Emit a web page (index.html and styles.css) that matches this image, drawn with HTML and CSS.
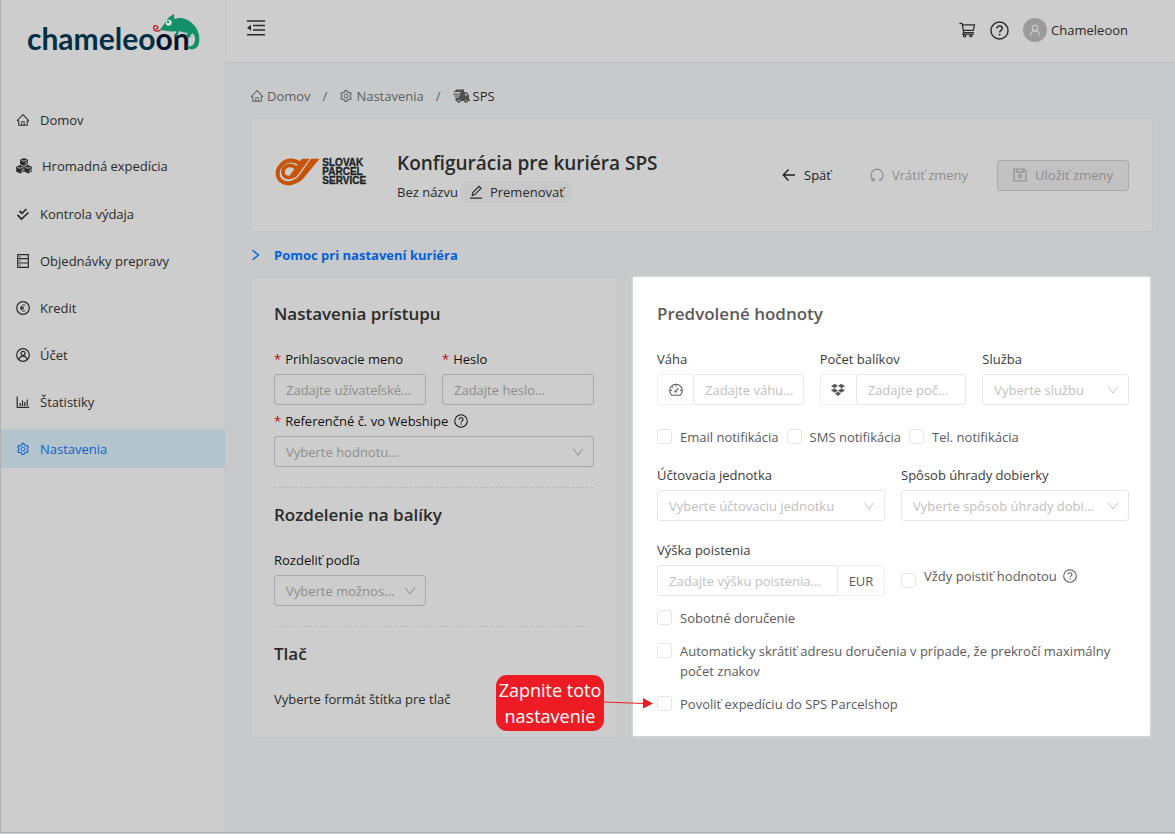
FILE: index.html
```html
<!DOCTYPE html>
<html lang="sk">
<head>
<meta charset="utf-8">
<meta name="viewport" content="width=device-width, initial-scale=1">
<title>Konfigurácia pre kuriéra SPS</title>
<link rel="stylesheet" href="styles.css">
</head>
<body>
<svg class="defs" aria-hidden="true">
  <symbol id="home" viewBox="0 0 1024 1024"><path fill="currentColor" d="M946.5 505L560.1 118.8l-25.9-25.9a31.5 31.5 0 00-44.4 0L77.5 505a63.9 63.9 0 00-18.8 46c.4 35.2 29.7 63.3 64.9 63.3h42.5V940h691.8V614.3h43.4c17.1 0 33.2-6.7 45.3-18.8a63.6 63.6 0 0018.7-45.3c0-17-6.7-33.1-18.8-45.2zM568 868H456V664h112v204zm217.9-325.7V868H632V640c0-22.1-17.9-40-40-40H432c-22.1 0-40 17.9-40 40v228H238.1V542.3h-96l370-369.7 23.1 23.1L882 542.3h-96.1z"/></symbol>
  <symbol id="gear" viewBox="0 0 1024 1024"><path fill="currentColor" d="M924.8 625.7l-65.5-56c3.1-19 4.7-38.4 4.7-57.8s-1.6-38.8-4.7-57.8l65.5-56a32.03 32.03 0 009.3-35.2l-.9-2.6a443.74 443.74 0 00-79.7-137.9l-1.8-2.1a32.12 32.12 0 00-35.1-9.5l-81.3 28.9c-30-24.6-63.5-44-99.7-57.6l-15.7-85a32.05 32.05 0 00-25.8-25.7l-2.7-.5c-52.1-9.4-106.9-9.4-159 0l-2.7.5a32.05 32.05 0 00-25.8 25.7l-15.8 85.4a351.86 351.86 0 00-99 57.4l-81.9-29.1a32 32 0 00-35.1 9.5l-1.8 2.1a446.02 446.02 0 00-79.7 137.9l-.9 2.6c-4.5 12.5-.8 26.5 9.3 35.2l66.3 56.6c-3.1 18.8-4.6 38-4.6 57.1 0 19.2 1.5 38.4 4.6 57.1L99 625.5a32.03 32.03 0 00-9.3 35.2l.9 2.6c18.1 50.4 44.9 96.9 79.7 137.9l1.8 2.1a32.12 32.12 0 0035.1 9.5l81.9-29.1c29.8 24.5 63.1 43.9 99 57.4l15.8 85.4a32.05 32.05 0 0025.8 25.7l2.7.5a449.4 449.4 0 00159 0l2.7-.5a32.05 32.05 0 0025.8-25.7l15.7-85a350 350 0 0099.7-57.6l81.3 28.9a32 32 0 0035.1-9.5l1.8-2.1c34.8-41.1 61.6-87.5 79.7-137.9l.9-2.6c4.5-12.3.8-26.3-9.3-35zM788.3 465.9c2.5 15.1 3.8 30.6 3.8 46.1s-1.3 31-3.8 46.1l-6.6 40.1 74.7 63.9a370.03 370.03 0 01-42.6 73.6L721 702.8l-31.4 25.8c-23.9 19.6-50.5 35-79.3 45.8l-38.1 14.3-17.9 97a377.5 377.5 0 01-85 0l-17.9-97.2-37.8-14.5c-28.5-10.8-55-26.2-78.7-45.7l-31.4-25.9-93.4 33.2c-17-22.9-31.2-47.6-42.6-73.6l75.5-64.5-6.5-40c-2.4-14.9-3.7-30.3-3.7-45.5 0-15.3 1.2-30.6 3.7-45.5l6.5-40-75.5-64.5c11.3-26.1 25.6-50.7 42.6-73.6l93.4 33.2 31.4-25.9c23.7-19.5 50.2-34.9 78.7-45.7l37.9-14.3 17.9-97.2c28.1-3.2 56.8-3.2 85 0l17.9 97 38.1 14.3c28.7 10.8 55.4 26.2 79.3 45.8l31.4 25.8 92.8-32.9c17 22.9 31.2 47.6 42.6 73.6L781.8 426l6.5 39.9z"/><circle cx="512" cy="512" r="144" fill="none" stroke="currentColor" stroke-width="68"/></symbol>
  <symbol id="help" viewBox="0 0 16 16"><g fill="none" stroke="currentColor" stroke-width="1.2"><circle cx="8" cy="8" r="7.2"/><path d="M5.8 6.4c0-3 4.5-2.8 4.5-.1 0 1.6-2.2 1.5-2.2 3.3"/></g><circle cx="8.1" cy="11.5" r=".8" fill="currentColor"/></symbol>
  <symbol id="down" viewBox="0 0 12 12"><path d="M1.2 2.5 6 9.2l4.8-6.7" fill="none" stroke="currentColor"/></symbol>
</svg>

<div class="app">
  <aside class="sidebar">
    <a class="brand" href="#">
      <svg viewBox="80 30 525 135" role="img" aria-label="chameleoon">
        <text x="80" y="149" class="brand-text">chamele<tspan>o</tspan><tspan class="brand-dark">on</tspan></text>
        <path class="brand-green" d="M478 91 498 62Q507 48 521 42l1 15q27-10 52 11 23 19 23 50 0 28-19 30-16 1-19-14 6 7 13 4 13-5 12-22-1-12-9-16l-8 14-12-6 8-10q-13 2-26-5l-8 17-5-2 4-14q-22 1-30-1-8-3-20-2Z"/>
        <circle cx="505" cy="68" r="9" fill="#d6e8e0"/><circle cx="503" cy="66" r="3.5" fill="#12805f"/>
        <path d="M480 91q-11 5-18-1c-6-8 0-16 8-12 6 4 1 11-4 8" fill="none" stroke="#c9101c" stroke-width="4"/>
      </svg>
    </a>
    <nav class="menu">
      <a href="#"><svg class="icon"><use href="#home"/></svg>Domov</a>
      <a href="#" class="wide"><svg class="icon-cubes" viewBox="0 0 16 16"><g fill="currentColor"><path d="m8 0 3.900 1.800v4.400L8 8 4.100 6.200V1.800zM4 7l3.800 1.800v4.600L4 15.400.2 13.400V8.800zM12 7l3.800 1.800v4.600L12 15.400l-3.800-2V8.800z"/></g><path d="m5.500 2.300 2.500 1 2.500-1M8.800 6.300l2-1V3.500M1.500 9.300l2.500 1 2.500-1M4.800 13.600l2-1v-2M9.500 9.300l2.500 1 2.500-1M12.800 13.600l2-1v-2" fill="none" stroke="#cdcdcd" stroke-width=".9"/></svg>Hromadná expedícia</a>
      <a href="#"><svg class="icon" viewBox="0 0 14 14"><path d="m3.500 4 2.500 2.300L10.500 2M1.500 7.800 5.500 12l7-6.500" fill="none" stroke="currentColor" stroke-width="1.700"/></svg>Kontrola výdaja</a>
      <a href="#"><svg class="icon" viewBox="0 0 14 14"><path d="M1.700.6h10.600v12.800H1.700zM1.700 4.600h10.600M1.700 9h10.600M3.500 2.700h1M3.500 6.800h1M3.500 11.200h1" fill="none" stroke="currentColor" stroke-width="1.200"/></svg>Objednávky prepravy</a>
      <a href="#"><svg class="icon" viewBox="0 0 14 14"><g fill="none" stroke="currentColor"><circle cx="7" cy="7" r="6.300" stroke-width="1.200"/><path d="M9.300 4.600C7 3 5.300 4.500 5.300 7s1.700 4 4 2.500M4 6.300h4M4 7.800h4"/></g></svg>Kredit</a>
      <a href="#"><svg class="icon" viewBox="0 0 14 14"><g fill="none" stroke="currentColor" stroke-width="1.200"><circle cx="7" cy="7" r="6.300"/><circle cx="7" cy="5.400" r="2"/><path d="M3.200 11.500c.6-4.400 7-4.400 7.600 0"/></g></svg>Účet</a>
      <a href="#"><svg class="icon" viewBox="0 0 14 14"><path d="M1.200 1.500v10.900h12M4.200 11V8M6.500 11V5.500M8.800 11V7M11.200 11V4.500" fill="none" stroke="currentColor" stroke-width="1.200"/></svg>Štatistiky</a>
      <a href="#" class="active" aria-current="page"><svg class="icon"><use href="#gear"/></svg>Nastavenia</a>
    </nav>
  </aside>

  <div class="page">
    <header class="topbar">
      <button class="plain" aria-label="Zbaliť menu"><svg class="icon-fold" viewBox="0 0 18 16"><path d="M0 1h18M6 5.500h12M6 10h12M0 14.700h18" stroke="currentColor" stroke-width="1.500"/><path d="M0 7.800 4 4.800v6z" fill="currentColor"/></svg></button>
      <div class="account">
        <button class="plain" aria-label="Košík"><svg class="icon-cart" viewBox="0 0 18 16"><g fill="none" stroke="currentColor" stroke-width="1.300"><path d="M.5 1h2.700l1.800 9.800h10.800M3.400 2.500h13l-1.200 6H4.500M5 10.800l-1 1.700h12"/><circle cx="6" cy="14" r="1.200"/><circle cx="12.500" cy="14" r="1.200"/></g></svg></button>
        <button class="plain" aria-label="Pomoc"><svg class="icon-help"><use href="#help"/></svg></button>
        <a class="user" href="#"><span class="avatar"><svg viewBox="0 0 12 12"><g fill="none" stroke="#cfcfcf" stroke-width="1.100"><circle cx="6" cy="4" r="2.700"/><path d="M1.500 11.500c.3-6 8.700-6 9 0"/></g></svg></span>Chameleoon</a>
      </div>
    </header>

    <main class="content">
      <nav class="crumbs" aria-label="Cesta">
        <a href="#"><svg class="icon"><use href="#home"/></svg>Domov</a><span>/</span>
        <a href="#"><svg class="icon"><use href="#gear"/></svg>Nastavenia</a><span>/</span>
        <b><svg class="icon-truck" viewBox="0 0 17 14"><path fill="#505050" d="M2.500.5H11V3h2.200L16 6v4.500h1V12H2.500V8.500H6v-1H1v-1h6v-1H0v-1h7.500V3H1V2h1.500z"/><path d="M12 4.200v2.300h2.700l-2.200-2.300z" fill="#c8c9cb"/><circle cx="5.800" cy="11.500" r="2.200" fill="#505050"/><circle cx="13" cy="11.500" r="2.200" fill="#505050"/><circle cx="5.800" cy="11.500" r=".8" fill="#c8c9cb"/><circle cx="13" cy="11.500" r=".8" fill="#c8c9cb"/></svg>SPS</b>
      </nav>

      <section class="card title-card">
        <svg class="courier" viewBox="0 0 276 192" role="img" aria-label="Slovak Parcel Service">
          <g fill="none" stroke="#c65306">
            <path d="M76 24C58 9 36 11 22 24 2 42 4 68 24 78c12 6 26 5 38-3" stroke-width="12"/>
            <path d="M64 36C52 26 40 27 31 33c-11 9-8 24 0 29 8 4 16 3 23-2" stroke-width="11"/>
          </g>
          <path d="M80 8h24L66 60q-7 8-16 7l-3-12z" fill="#c65306"/>
          <path d="M108 8h26L86 66Q76 79 60 83l-4-11q10-4 16-13z" fill="#c65306"/>
          <g class="courier-text"><text x="142" y="31">SLOVAK</text><text x="142" y="58">PARCEL</text><text x="142" y="85">SERVICE</text></g>
        </svg>
        <div class="title-block">
          <h1>Konfigurácia pre kuriéra SPS</h1>
          <div class="subtitle">Bez názvu <button class="rename"><svg class="icon" viewBox="0 0 14 14"><path d="M1 13.200h12M3.300 10.500l.5-3L10 1.300l2 2-6.200 6.300z" fill="none" stroke="currentColor" stroke-width="1.200"/></svg>Premenovať</button></div>
        </div>
        <div class="actions">
          <button class="plain back"><svg class="icon" viewBox="0 0 14 14"><path d="M13 7H1.500M6.500 1.500 1.200 7l5.300 5.500" fill="none" stroke="currentColor" stroke-width="1.300"/></svg>Späť</button>
          <button class="plain" disabled><svg class="icon" viewBox="0 0 14 14"><path d="M3.800 12.300a6 6 0 1 1 6.400 0M1.500 12.600h2.600V10M10 13v-2" fill="none" stroke="currentColor" stroke-width="1.200"/></svg>Vrátiť zmeny</button>
          <button class="save" disabled><svg class="icon" viewBox="0 0 14 14"><g fill="none" stroke="currentColor" stroke-width="1.200"><path d="M1 1h9.800L13 3.200V13H1zM4 1v3.200h6V1"/><circle cx="7" cy="8.300" r="1.700"/></g></svg>Uložiť zmeny</button>
        </div>
      </section>

      <a class="help-link" href="#"><svg viewBox="0 0 10 12"><path d="m1.500 1.200 6 4.800-6 4.800" fill="none" stroke="currentColor" stroke-width="1.400"/></svg>Pomoc pri nastavení kuriéra</a>

      <div class="columns">
        <form class="card panel">
          <h2>Nastavenia prístupu</h2>
          <div class="two">
            <div class="field"><label for="login"><i>*</i>Prihlasovacie meno</label><input id="login" class="control" type="text" placeholder="Zadajte užívateľské..."></div>
            <div class="field"><label for="pass"><i>*</i>Heslo</label><input id="pass" class="control" type="password" placeholder="Zadajte heslo..."></div>
          </div>
          <div class="field next"><label for="ref"><i>*</i>Referenčné č. vo Webshipe <svg class="icon hint"><use href="#help"/></svg></label><div class="select"><select id="ref" class="control"><option>Vyberte hodnotu...</option></select><svg><use href="#down"/></svg></div></div>
          <hr>
          <h2>Rozdelenie na balíky</h2>
          <div class="two">
            <div class="field"><label for="split">Rozdeliť podľa</label><div class="select"><select id="split" class="control"><option>Vyberte možnos...</option></select><svg><use href="#down"/></svg></div></div>
          </div>
          <hr>
          <h2>Tlač</h2>
          <p>Vyberte formát štítka pre tlač</p>
        </form>

        <form class="panel spotlight">
          <h2>Predvolené hodnoty</h2>
          <div class="three">
            <div class="field"><label for="weight">Váha</label><div class="group"><span class="addon"><svg class="icon" viewBox="0 0 14 14"><g fill="none" stroke="currentColor" stroke-width="1.100"><path d="M2.800 12.300a6.300 6.300 0 1 1 8.400 0zM6.500 8.500l3-3.300M7 2v1.500M1.500 7.500H3M11 7.500h1.500M3.300 3.700l1 1"/><circle cx="6.500" cy="8.500" r=".6"/></g></svg></span><input id="weight" class="control" type="text" placeholder="Zadajte váhu..."></div></div>
            <div class="field"><label for="count">Počet balíkov</label><div class="group"><span class="addon"><svg class="icon" viewBox="0 0 14 14"><path fill="currentColor" d="M4 .8 7 3 3.500 5.200 0 3zM10 .8 7 3l3.500 2.200L14 3zM3.500 5.200 7 7.400 4 9.700 0 7.400zM10.500 5.200 7 7.400l3 2.300 4-2.300zM4 10.800l3-2.300 3 2.300-3 2.200z"/><path d="M7 3.200l3.300 2.100L7 7.200 3.700 5.300z" fill="#fff"/></svg></span><input id="count" class="control" type="text" placeholder="Zadajte poč..."></div></div>
            <div class="field"><label for="service">Služba</label><div class="select"><select id="service" class="control"><option>Vyberte službu</option></select><svg><use href="#down"/></svg></div></div>
          </div>
          <div class="checks">
            <label class="check"><input type="checkbox">Email notifikácia</label>
            <label class="check"><input type="checkbox">SMS notifikácia</label>
            <label class="check"><input type="checkbox">Tel. notifikácia</label>
          </div>
          <div class="two">
            <div class="field"><label for="unit">Účtovacia jednotka</label><div class="select"><select id="unit" class="control"><option>Vyberte účtovaciu jednotku</option></select><svg><use href="#down"/></svg></div></div>
            <div class="field"><label for="cod">Spôsob úhrady dobierky</label><div class="select"><select id="cod" class="control"><option>Vyberte spôsob úhrady dobi...</option></select><svg><use href="#down"/></svg></div></div>
          </div>
          <div class="two insurance">
            <div class="field"><label for="ins">Výška poistenia</label><div class="group"><input id="ins" class="control" type="text" placeholder="Zadajte výšku poistenia..."><span class="addon right">EUR</span></div></div>
            <label class="check always"><input type="checkbox"><span>Vždy poistiť hodnotou <svg class="icon hint"><use href="#help"/></svg></span></label>
          </div>
          <div class="stack">
            <label class="check"><input type="checkbox">Sobotné doručenie</label>
            <label class="check"><input type="checkbox">Automaticky skrátiť adresu doručenia v prípade, že prekročí maximálny počet znakov</label>
            <div class="marked">
              <label class="check"><input type="checkbox">Povoliť expedíciu do SPS Parcelshop</label>
              <div class="callout"><div class="bubble">Zapnite toto nastavenie</div><svg viewBox="0 0 49 12"><path d="m0 5 40 1.500" stroke="#ed1c24"/><path d="M39 1v10.500l10-5z" fill="#ed1c24"/></svg></div>
            </div>
          </div>
        </form>
      </div>
    </main>
  </div>
</div>
</body>
</html>
```
FILE: styles.css
```css
* { box-sizing: border-box; }

body {
  margin: 0;
  font: 13px/20px "Open Sans", "Noto Sans", sans-serif;
  color: #2a2a2a;
  background: #c8c9cb;
}

a { color: inherit; text-decoration: none; }
button, input, select { font: inherit; color: inherit; }
.defs { position: absolute; width: 0; height: 0; }
.icon { width: 14px; height: 14px; flex: none; }

.app {
  display: flex;
  min-height: 833px;
  border-left: 1px solid #b0b0b0;
  border-bottom: 1px solid #b0b0b0;
}

.sidebar {
  width: 225px;
  flex: none;
  background: #cdcdcd;
  border-right: 1px solid #c0c4c6;
}

.brand { display: block; height: 100px; padding: 10px 0 0 26px; }
.brand svg { display: block; width: 175px; height: 45px; }
.brand-text { font: 700 90px Lato, sans-serif; fill: #032f44; }
.brand-dark { fill: #03112a; }
.brand-green { fill: #149068; }

.menu { display: grid; gap: 8px; }
.menu a {
  display: flex;
  align-items: center;
  gap: 10px;
  height: 39px;
  padding-left: 15px;
}
.menu .wide { padding-bottom: 1px; }
.icon-cubes { width: 16px; height: 16px; flex: none; }
.menu .active { background: #b3c4cc; color: #0a62d0; }

.page { flex: 1; min-width: 0; }

.topbar {
  display: flex;
  justify-content: space-between;
  align-items: center;
  height: 62px;
  padding: 0 47px 2px 21px;
  background: #cdcdcd;
  box-shadow: 0 1px 2px #b9c0c6;
}
.plain {
  display: flex;
  align-items: center;
  gap: 8px;
  padding: 0;
  border: 0;
  background: none;
}
.icon-fold { width: 18px; height: 16px; margin-bottom: 4px; }
.account { display: flex; align-items: center; gap: 14px; }
.icon-cart { width: 17px; height: 16px; }
.icon-help { width: 19px; height: 19px; }
.user { display: flex; align-items: center; gap: 4px; }
.avatar {
  display: grid;
  place-items: center;
  width: 24px;
  height: 24px;
  border-radius: 50%;
  background: #9b9b9b;
}
.avatar svg { width: 12px; height: 12px; }

.content { padding: 24px 22px 24px 24px; }

.crumbs { display: flex; gap: 12px; color: #5c5e60; }
.crumbs a, .crumbs b { display: flex; align-items: center; gap: 3px; font-weight: 400; }
.crumbs b { color: #2a2a2a; }
.icon-truck { width: 17px; height: 14px; }

.card { background: #cdcdcd; border: 1px solid #bfc4ca; border-radius: 3px; }

.title-card {
  display: flex;
  align-items: center;
  height: 114px;
  margin-top: 12px;
  padding: 0 23px 0 24px;
}
.courier { width: 92px; height: 64px; margin-top: 26px; }
.courier-text { font: 700 30px "Liberation Sans", sans-serif; fill: #1c2527; stroke: #1c2527; stroke-width: 1; }
.title-block { margin: 2px 0 0 30px; }
h1 { margin: 0 0 4px; font-size: 19px; line-height: 28px; font-weight: 600; }
.subtitle { display: flex; align-items: center; gap: 3px; }
.rename {
  display: flex;
  align-items: center;
  gap: 7px;
  height: 22px;
  padding: 0 8px;
  border: 0;
  border-radius: 3px;
  background: #c8c8c8;
}
.actions { display: flex; align-items: center; margin-left: auto; color: #8d8d8d; }
.actions .plain { margin-right: 39px; }
.actions .plain + .plain { margin-right: 29px; }
.actions button:disabled { color: #8d8d8d; }
.back { color: #1c1c1c; }
.save {
  display: flex;
  align-items: center;
  gap: 8px;
  height: 31px;
  padding: 0 15px;
  border: 1px solid #a9a9a9;
  border-radius: 3px;
  background: #c2c2c2;
}

.help-link {
  display: flex;
  align-items: center;
  gap: 13px;
  margin: 13px 0 12px 1px;
  font-weight: 700;
  color: #0460d6;
}
.help-link svg { width: 10px; height: 12px; }

.columns { display: grid; grid-template-columns: 368fr 520fr; gap: 15px; }
.panel { min-width: 0; padding: 24px 23px; }
.spotlight {
  margin: 0 3px 2px 0;
  padding: 25px 21px 22px 24px;
  background: #fff;
  box-shadow: 0 0 3px #e4e6e8;
  color: #5a5a5a;
}

h2 { margin: 0 0 23px; font-size: 17px; line-height: 24px; font-weight: 600; }
hr { margin: 20px 0 15px; border: 0; border-top: 1px dashed #bababa; }
p { margin: 0; }

.two { display: grid; grid-template-columns: 1fr 1fr; gap: 16px; }
.three { display: grid; grid-template-columns: 1fr 1fr 1fr; gap: 16px; }

.field { min-width: 0; }
.field > label { display: flex; align-items: center; margin-bottom: 5px; color: #111; white-space: nowrap; }
.field i { margin-right: 4px; font-style: normal; color: #c40000; }
.next { margin-top: 6px; }
.hint { margin-left: 6px; }

.control {
  display: block;
  width: 100%;
  min-width: 0;
  height: 31px;
  padding: 0 10px 0 11px;
  border: 1px solid #a9a9a9;
  border-radius: 3px;
  background: none;
  color: #8d8d8d;
  appearance: none;
  text-overflow: ellipsis;
}
.control::placeholder { color: #8d8d8d; opacity: 1; }
.select { display: grid; grid-template-columns: 1fr 22px; align-items: center; }
.select .control { grid-area: 1 / 1 / 2 / 3; }
.select svg { grid-area: 1 / 2; width: 12px; height: 12px; color: #8d8d8d; pointer-events: none; }

.spotlight .field > label { color: #3a3a3a; }
.spotlight .control { border-color: #e6e6e6; color: #bfbfbf; }
.spotlight .control::placeholder { color: #bfbfbf; }
.spotlight .select svg { color: #c4c4c4; }

.group { display: flex; }
.group .control { padding-right: 4px; }
.addon {
  display: grid;
  place-items: center;
  flex: none;
  width: 36px;
  border: 1px solid #f0f0f0;
  border-right: 0;
  border-radius: 3px 0 0 3px;
}
.addon.right { width: 47px; border: 1px solid #f0f0f0; border-left: 0; border-radius: 0 3px 3px 0; }

.check { display: flex; align-items: flex-start; gap: 8px; }
.check input {
  appearance: none;
  flex: none;
  width: 15px;
  height: 15px;
  margin: 2px 0 0;
  border: 1px solid #e6e6e6;
  border-radius: 3px;
}
.checks { display: flex; gap: 8px; margin: 22px 0 18px; white-space: nowrap; }
.insurance { margin-top: 19px; }
.always { align-self: end; align-items: end; white-space: nowrap; }
.always input { margin-bottom: 8px; }
.always span { display: flex; align-items: center; margin-bottom: 10px; }
.stack { display: grid; gap: 13px; margin-top: 12px; }

.marked { position: relative; }
.callout {
  position: absolute;
  top: -19px;
  right: calc(100% + 4px);
  display: flex;
  align-items: center;
}
.bubble {
  width: 108px;
  padding: 2px 0;
  border-radius: 11px;
  background: #ed1c24;
  color: #fff;
  font-size: 18px;
  line-height: 26px;
  text-align: center;
}
.callout svg { width: 49px; height: 12px; }
```
